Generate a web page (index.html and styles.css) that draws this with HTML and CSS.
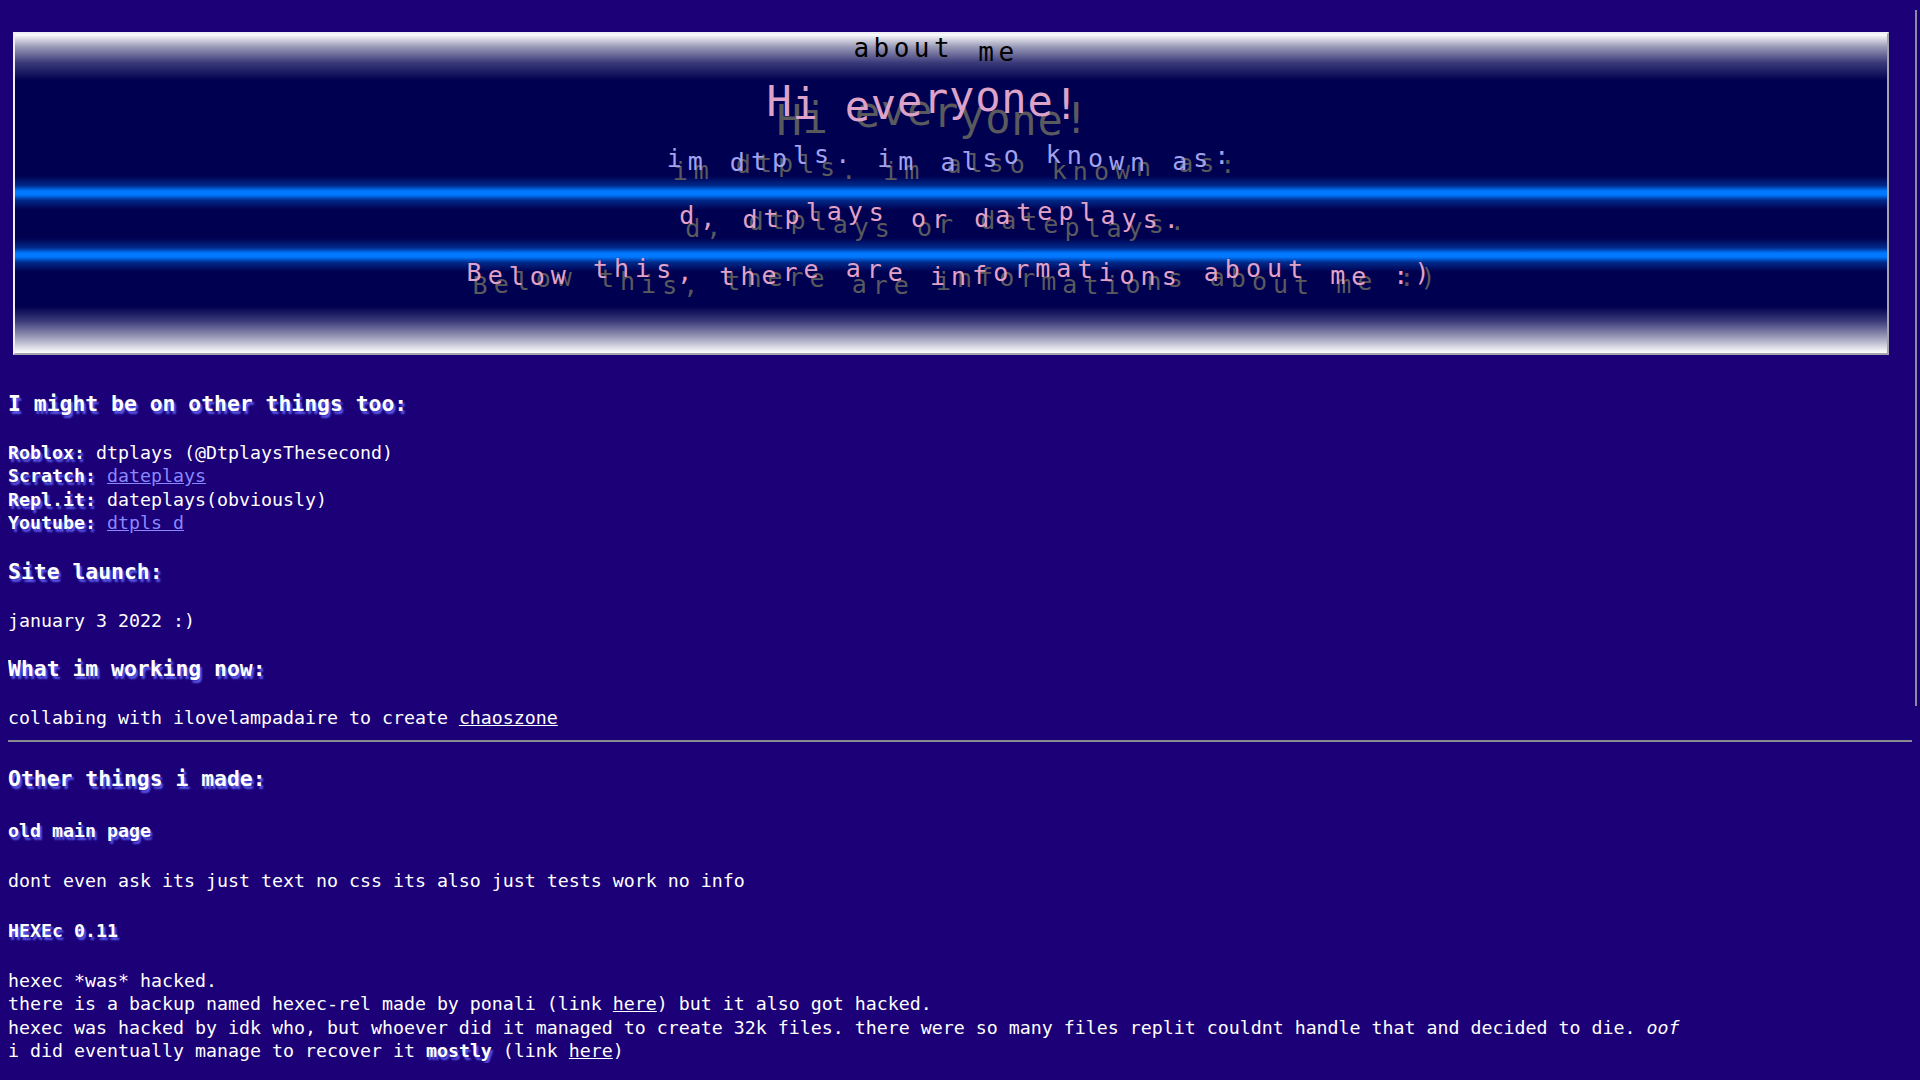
FILE: index.html
```html
<!DOCTYPE html>
<html>
<head>
<meta charset="utf-8">
<title>about me</title>
<link rel="stylesheet" href="styles.css">
</head>
<body>
<div class="banner">
  <div class="row r1">about <span class="low">me</span></div>
  <div class="row r2 wv"><span class="k0">H</span><span class="k1">i</span> <span class="k3">e</span><span class="k4">v</span><span class="k5">e</span><span class="k6">r</span><span class="k7">y</span><span class="k8">o</span><span class="k9">n</span><span class="k0">e</span><span class="k1">!</span></div>
  <div class="row rs lav wv"><span class="k0">i</span><span class="k1">m</span> <span class="k3">d</span><span class="k4">t</span><span class="k5">p</span><span class="k6">l</span><span class="k7">s</span><span class="k8">.</span> <span class="k0">i</span><span class="k1">m</span> <span class="k3">a</span><span class="k4">l</span><span class="k5">s</span><span class="k6">o</span> <span class="k8">k</span><span class="k9">n</span><span class="k0">o</span><span class="k1">w</span><span class="k2">n</span> <span class="k4">a</span><span class="k5">s</span><span class="k6">:</span></div>
  <div class="row rs r4 wv"><span class="k0">d</span><span class="k1">,</span> <span class="k3">d</span><span class="k4">t</span><span class="k5">p</span><span class="k6">l</span><span class="k7">a</span><span class="k8">y</span><span class="k9">s</span> <span class="k1">o</span><span class="k2">r</span> <span class="k4">d</span><span class="k5">a</span><span class="k6">t</span><span class="k7">e</span><span class="k8">p</span><span class="k9">l</span><span class="k0">a</span><span class="k1">y</span><span class="k2">s</span><span class="k3">.</span></div>
  <div class="row rs wv"><span class="k0">B</span><span class="k1">e</span><span class="k2">l</span><span class="k3">o</span><span class="k4">w</span> <span class="k6">t</span><span class="k7">h</span><span class="k8">i</span><span class="k9">s</span><span class="k0">,</span> <span class="k2">t</span><span class="k3">h</span><span class="k4">e</span><span class="k5">r</span><span class="k6">e</span> <span class="k8">a</span><span class="k9">r</span><span class="k0">e</span> <span class="k2">i</span><span class="k3">n</span><span class="k4">f</span><span class="k5">o</span><span class="k6">r</span><span class="k7">m</span><span class="k8">a</span><span class="k9">t</span><span class="k0">i</span><span class="k1">o</span><span class="k2">n</span><span class="k3">s</span> <span class="k5">a</span><span class="k6">b</span><span class="k7">o</span><span class="k8">u</span><span class="k9">t</span> <span class="k1">m</span><span class="k2">e</span> <span class="k4">:</span><span class="k5">)</span></div>
</div>

<h3>I might be on other things too:</h3>
<div class="txt">
  <b>Roblox:</b> dtplays (@DtplaysThesecond)<br>
  <b>Scratch:</b> <a class="lnk" href="#">dateplays</a><br>
  <b>Repl.it:</b> dateplays(obviously)<br>
  <b>Youtube:</b> <a class="lnk" href="#">dtpls d</a>
</div>

<h3>Site launch:</h3>
<div class="txt">january 3 2022 :)</div>

<h3>What im working now:</h3>
<div class="txt">collabing with ilovelampadaire to create <a class="vis" href="#">chaoszone</a></div>

<hr class="sep">

<h3>Other things i made:</h3>
<h4>old main page</h4>
<div class="txt">dont even ask its just text no css its also just tests work no info</div>

<h4>HEXEc 0.11</h4>
<div class="txt">
  hexec *was* hacked.<br>
  there is a backup named hexec-rel made by ponali (link <a class="vis" href="#">here</a>) but it also got hacked.<br>
  hexec was hacked by idk who, but whoever did it managed to create 32k files. there were so many files replit couldnt handle that and decided to die. <i>oof</i><br>
  i did eventually manage to recover it <b>mostly</b> (link <a class="vis" href="#">here</a>)
</div>

<div class="thumb"></div>
</body>
</html>
```

FILE: styles.css
```css
html {
  scrollbar-width: none;
}

body {
  margin: 8px;
  background: #1b0077;
  color: #ffffff;
  font-family: "DejaVu Sans Mono", "Liberation Mono", monospace;
  font-size: 18.27px;
  line-height: 23.4px;
}

.banner {
  margin: 24px 23px 35px 5px;
  padding: 0 0 52px 0;
  border-style: solid;
  border-width: 2px;
  border-color: #eeeef4 #a4a4ac #a4a4ac #eeeef4;
  background: linear-gradient(to bottom,
    #ffffff 0%,
    #9a9ab8 4%,
    #3a3a7a 9%,
    #000050 14.5%,
    #000050 44.5%,
    #002a8a 47.5%,
    #0078ff 49.2%,
    #0078ff 50.4%,
    #002a8a 52.1%,
    #000050 55%,
    #000050 64%,
    #002a8a 67%,
    #0078ff 68.7%,
    #0078ff 69.9%,
    #002a8a 71.6%,
    #000050 74.5%,
    #000050 85.5%,
    #3a3a7a 90%,
    #9a9ab8 95%,
    #ffffff 100%);
  font-family: "DejaVu Sans Mono", monospace;
  text-align: center;
}

.row {
  white-space: pre;
}

.r1 {
  color: #000000;
  font-size: 26px;
  line-height: 28px;
  letter-spacing: 4.5px;
  padding-right: 30px;
}

.low {
  display: inline-block;
  transform: translateY(4px);
  margin-left: 4px;
}

.r2 {
  color: #dca2c8;
  font-size: 42px;
  line-height: 68px;
  letter-spacing: 0.8px;
  padding: 6px 56px 0 0;
  height: 62px;
  overflow: visible;
  --a: 5px;
  --d: 14px;
  --sx: 10px;
}

.rs {
  color: #e2a2c8;
  font-size: 25px;
  line-height: 57px;
  letter-spacing: 6px;
  --a: 4.5px;
  --d: 9px;
  --sx: 6px;
}

.r4 {
  padding-right: 38px;
}

.lav {
  color: #a2a2ee;
}

.wv span {
  display: inline-block;
}

.wv .k0 { transform: translateY(0); text-shadow: var(--sx) calc(var(--d) + var(--a) * 0.951) 0 #5a5a5e; }
.wv .k1 { transform: translateY(calc(var(--a) * 0.588)); text-shadow: var(--sx) var(--d) 0 #5a5a5e; }
.wv .k2 { transform: translateY(calc(var(--a) * 0.951)); text-shadow: var(--sx) calc(var(--d) - var(--a) * 0.951) 0 #5a5a5e; }
.wv .k3 { transform: translateY(calc(var(--a) * 0.951)); text-shadow: var(--sx) calc(var(--d) - var(--a) * 1.539) 0 #5a5a5e; }
.wv .k4 { transform: translateY(calc(var(--a) * 0.588)); text-shadow: var(--sx) calc(var(--d) - var(--a) * 1.539) 0 #5a5a5e; }
.wv .k5 { transform: translateY(0); text-shadow: var(--sx) calc(var(--d) - var(--a) * 0.951) 0 #5a5a5e; }
.wv .k6 { transform: translateY(calc(var(--a) * -0.588)); text-shadow: var(--sx) var(--d) 0 #5a5a5e; }
.wv .k7 { transform: translateY(calc(var(--a) * -0.951)); text-shadow: var(--sx) calc(var(--d) + var(--a) * 0.951) 0 #5a5a5e; }
.wv .k8 { transform: translateY(calc(var(--a) * -0.951)); text-shadow: var(--sx) calc(var(--d) + var(--a) * 1.539) 0 #5a5a5e; }
.wv .k9 { transform: translateY(calc(var(--a) * -0.588)); text-shadow: var(--sx) calc(var(--d) + var(--a) * 1.539) 0 #5a5a5e; }

h3 {
  font-size: 21.4px;
  line-height: 27.4px;
  margin: 23.4px 0;
  font-weight: bold;
  text-shadow: 2px 3px 2px #5c5cf0;
}

h4 {
  font-size: 18.27px;
  line-height: 23.4px;
  margin: 26.6px 0;
  font-weight: bold;
  text-shadow: 2px 3px 2px #5c5cf0;
}

b {
  text-shadow: 2px 3px 2px #5c5cf0;
}

.txt {
  margin: 0;
}

.lnk {
  color: #8a88ff;
  text-decoration: underline;
}

.vis {
  color: #ffffff;
  text-decoration: underline;
}

.sep {
  margin: 10px 0;
  border: 0;
  border-top: 1px solid #86868e;
  border-bottom: 1px solid #8e8e96;
  height: 0;
}

.thumb {
  position: fixed;
  top: 10px;
  right: 3px;
  width: 2px;
  height: 696px;
  background: #8c8c9c;
}
```
